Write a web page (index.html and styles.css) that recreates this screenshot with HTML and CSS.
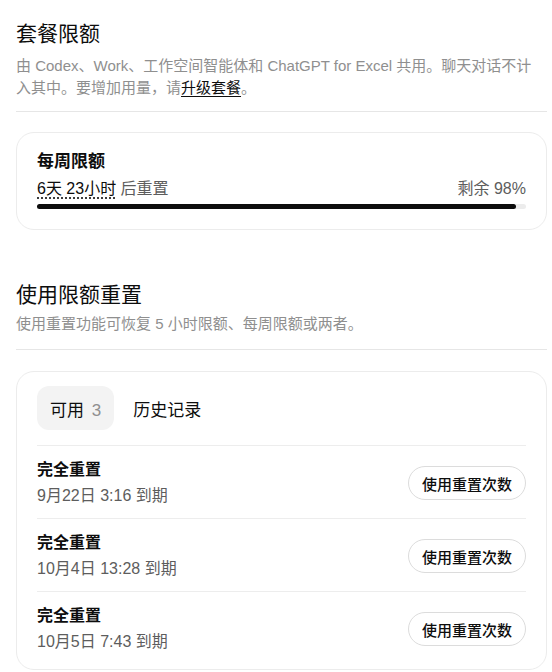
FILE: index.html
```html
<!DOCTYPE html>
<html lang="zh-CN">
<head>
  <meta charset="UTF-8" />
  <meta name="viewport" content="width=device-width,initial-scale=1" />
  <title>套餐限额</title>
  <link rel="stylesheet" href="styles.css">
</head>
<body>

  <section class="block">
    <h2 class="title">套餐限额</h2>
    <p class="desc">由 Codex、Work、工作空间智能体和 ChatGPT for Excel 共用。聊天对话不计入其中。要增加用量，请<a href="#">升级套餐</a>。</p>
    <hr class="rule">
    <div class="card usage">
      <div class="usage-name">每周限额</div>
      <div class="usage-meta">
        <span><span class="reset-time">6天 23小时</span> 后重置</span>
        <span>剩余 98%</span>
      </div>
      <div class="bar"><div class="bar-fill" style="width: 98%"></div></div>
    </div>
  </section>

  <section class="block second">
    <h2 class="title">使用限额重置</h2>
    <p class="desc">使用重置功能可恢复 5 小时限额、每周限额或两者。</p>
    <hr class="rule">
    <div class="card resets">
      <div class="tabs">
        <button class="tab active">可用 <span class="count">3</span></button>
        <button class="tab">历史记录</button>
      </div>
      <ul class="reset-list">
        <li class="reset-row">
          <div>
            <div class="reset-name">完全重置</div>
            <div class="reset-date">9月22日 3:16 到期</div>
          </div>
          <button class="use-btn">使用重置次数</button>
        </li>
        <li class="reset-row">
          <div>
            <div class="reset-name">完全重置</div>
            <div class="reset-date">10月4日 13:28 到期</div>
          </div>
          <button class="use-btn">使用重置次数</button>
        </li>
        <li class="reset-row">
          <div>
            <div class="reset-name">完全重置</div>
            <div class="reset-date">10月5日 7:43 到期</div>
          </div>
          <button class="use-btn">使用重置次数</button>
        </li>
      </ul>
    </div>
  </section>

</body>
</html>
```

FILE: styles.css
```css
body {
  font-family: "Liberation Sans", "Noto Sans CJK SC", sans-serif;
  background: #fff;
  color: #0d0d0d;
  margin: 0;
  padding: 20px 5px 0 16px;
}
.title {
  margin: 0;
  font-size: 21px;
  line-height: 28px;
  font-weight: 400;
}
.desc {
  max-width: 522px;
  margin: 7px 0 0;
  font-size: 15px;
  line-height: 22px;
  color: #8f8f8f;
}
.desc a {
  color: #0d0d0d;
  text-decoration: underline;
  text-underline-offset: 3px;
}
.rule {
  border: none;
  border-top: 1px solid #e6e6e6;
  margin: 12px 0 0;
}
.card {
  margin-top: 20px;
  border: 1px solid #ececec;
  border-radius: 18px;
  box-sizing: border-box;
}
.usage {
  padding: 17px 20px 20px;
}
.usage-name {
  font-size: 17px;
  line-height: 24px;
  font-weight: 600;
}
.usage-meta {
  display: flex;
  justify-content: space-between;
  margin-top: 4px;
  font-size: 16px;
  line-height: 22px;
  color: #5d5d5d;
}
.reset-time {
  color: #0d0d0d;
  text-decoration: underline dotted;
  text-underline-offset: 4px;
}
.bar {
  margin-top: 4px;
  height: 5px;
  background: #ececec;
  border-radius: 3px;
}
.bar-fill {
  height: 100%;
  background: #0d0d0d;
  border-radius: 3px;
}
.second {
  margin-top: 51px;
}
.second .desc {
  margin-top: 4px;
}
.second .rule {
  margin-top: 14px;
}
.second .card {
  margin-top: 21px;
}
.resets {
  padding: 14px 20px 5px;
}
.tabs {
  display: flex;
  gap: 6px;
  padding-bottom: 15px;
  border-bottom: 1px solid #ededed;
}
.tab {
  font: inherit;
  font-size: 17px;
  height: 44px;
  padding: 0 13px;
  border: none;
  border-radius: 12px;
  background: transparent;
  color: #0d0d0d;
  cursor: pointer;
}
.tab.active {
  background: #f3f3f3;
}
.count {
  color: #8f8f8f;
  margin-left: 3px;
}
.reset-list {
  list-style: none;
  margin: 0;
  padding: 0;
}
.reset-row {
  display: flex;
  justify-content: space-between;
  align-items: center;
  padding: 12px 0 10px;
  border-bottom: 1px solid #ededed;
}
.reset-row:last-child {
  border-bottom: none;
}
.reset-name {
  font-size: 16px;
  line-height: 24px;
  font-weight: 600;
}
.reset-date {
  margin-top: 2px;
  font-size: 16px;
  line-height: 24px;
  color: #5d5d5d;
}
.use-btn {
  font: inherit;
  font-size: 15px;
  font-weight: 500;
  height: 34px;
  padding: 0 13px;
  background: #fff;
  color: #0d0d0d;
  border: 1px solid #dcdcdc;
  border-radius: 999px;
  cursor: pointer;
}
```
